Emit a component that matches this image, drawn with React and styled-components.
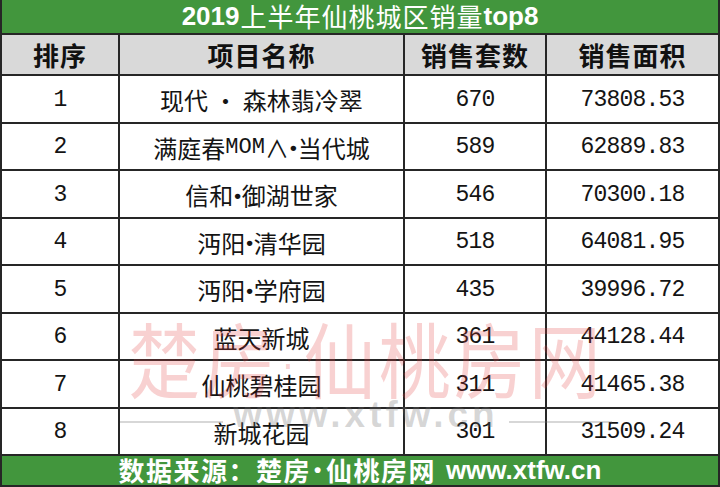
import React from 'react';
import styled, { createGlobalStyle } from 'styled-components';

const GlobalStyle = createGlobalStyle`
  html, body {
    margin: 0;
    padding: 0;
    background: #ffffff;
  }
`;

const rows = [
  { rank: 1, name: '现代 · 森林翡冷翠', count: 670, area: '73808.53' },
  { rank: 2, name: '满庭春MOM∧•当代城', count: 589, area: '62889.83' },
  { rank: 3, name: '信和•御湖世家', count: 546, area: '70300.18' },
  { rank: 4, name: '沔阳•清华园', count: 518, area: '64081.95' },
  { rank: 5, name: '沔阳•学府园', count: 435, area: '39996.72' },
  { rank: 6, name: '蓝天新城', count: 361, area: '44128.44' },
  { rank: 7, name: '仙桃碧桂园', count: 311, area: '41465.38' },
  { rank: 8, name: '新城花园', count: 301, area: '31509.24' },
];

const Sheet = styled.div`
  position: relative;
  box-sizing: border-box;
  width: 720px;
  height: 487px;
  padding: 0 2px 2px 2px;
  background: #262626;
  display: grid;
  grid-template-columns: 116px 283px 140px 171px;
  grid-template-rows: 33px 39px repeat(8, 1fr) 29px;
  gap: 2px;
  overflow: hidden;
`;

const Banner = styled.div`
  grid-column: 1 / -1;
  background: #42963d;
  color: #ffffff;
  display: flex;
  align-items: center;
  justify-content: center;
  font-family: "Noto Sans CJK SC", sans-serif;
  font-size: ${(p) => p.$size}px;
  font-weight: ${(p) => p.$weight};
  letter-spacing: ${(p) => p.$spacing}px;
  line-height: 1.1;
  white-space: nowrap;
`;

const Latin = styled.span`
  font-family: "Liberation Sans", Arial, sans-serif;
  font-weight: 700;
  letter-spacing: 0;
  margin: ${(p) => p.$margin || '0'};
`;

const Dot = styled.span`
  font-family: "Liberation Sans", Arial, sans-serif;
  font-weight: 700;
  font-size: 0.8em;
  margin: 0 ${(p) => p.$gap || 1}px;
`;

const Narrow = styled.span`
  font-family: "Liberation Mono", "Courier New", monospace;
  font-size: 0.92em;
  letter-spacing: 0;
`;

const HeadCell = styled.div`
  background: #d9d9d9;
  color: #111111;
  display: flex;
  align-items: center;
  justify-content: center;
  font-family: "Noto Sans CJK SC", sans-serif;
  font-size: 26px;
  font-weight: 700;
  letter-spacing: 1px;
  line-height: 1;
`;

const Cell = styled.div`
  background: #ffffff;
  color: #141414;
  display: flex;
  align-items: center;
  justify-content: center;
  padding-top: 3px;
  font-family: ${(p) =>
    p.$mono
      ? '"Liberation Mono", "Courier New", monospace'
      : '"Noto Sans CJK SC", sans-serif'};
  font-size: ${(p) => (p.$mono ? 23 : 24)}px;
  letter-spacing: ${(p) => (p.$mono ? -0.8 : 0)}px;
  font-weight: 400;
  line-height: 1;
  white-space: nowrap;
`;

const Watermark = styled.div`
  position: absolute;
  left: 120px;
  top: 316px;
  width: 492px;
  display: flex;
  flex-direction: column;
  align-items: center;
  pointer-events: none;
`;

const WatermarkTitle = styled.div`
  font-family: "Noto Sans CJK SC", sans-serif;
  font-size: 72px;
  font-weight: 400;
  letter-spacing: 3px;
  line-height: 1;
  color: rgba(226, 62, 62, 0.24);
  white-space: nowrap;
  transform: scaleY(1.14);
  transform-origin: top center;
`;

const WatermarkDot = styled.span`
  font-family: "Liberation Sans", Arial, sans-serif;
  font-size: 40px;
  margin: 0 6px 0 3px;
  vertical-align: 12px;
`;

const WatermarkSite = styled.div`
  display: flex;
  align-items: center;
  gap: 10px;
  margin-top: 8px;
  width: 100%;
  color: rgba(110, 110, 110, 0.28);
  font-family: "Liberation Sans", Arial, sans-serif;
  font-size: 37px;
  font-weight: 700;
  letter-spacing: 4px;
  line-height: 1;
`;

const Rule = styled.span`
  flex: 1;
  height: 2px;
  background: rgba(110, 110, 110, 0.28);
  margin-top: 14px;
`;

function renderName(name) {
  const parts = name.split('•');
  return parts.map((part, i) => (
    <React.Fragment key={i}>
      {i > 0 && <Dot>•</Dot>}
      {part.includes('MOM') ? (
        <>
          {part.split('MOM')[0]}
          <Narrow>MOM</Narrow>
          {part.split('MOM')[1]}
        </>
      ) : (
        part
      )}
    </React.Fragment>
  ));
}

export default function App() {
  return (
    <>
      <GlobalStyle />
      <Sheet>
        <Banner $size={26} $weight={400} $spacing={1}>
          <Latin $margin="0 1px 0 0">2019</Latin>上半年仙桃城区销量<Latin>top8</Latin>
        </Banner>

        <HeadCell>排序</HeadCell>
        <HeadCell>项目名称</HeadCell>
        <HeadCell>销售套数</HeadCell>
        <HeadCell>销售面积</HeadCell>

        {rows.map((r) => (
          <React.Fragment key={r.rank}>
            <Cell $mono>{r.rank}</Cell>
            <Cell>{renderName(r.name)}</Cell>
            <Cell $mono>{r.count}</Cell>
            <Cell $mono>{r.area}</Cell>
          </React.Fragment>
        ))}

        <Banner $size={26} $weight={700} $spacing={1.5}>
          数据来源：楚房<Dot $gap={3}>•</Dot>仙桃房网<Latin $margin="0 0 0 10px">www.xtfw.cn</Latin>
        </Banner>

        <Watermark>
          <WatermarkTitle>
            楚房<WatermarkDot>·</WatermarkDot>仙桃房网
          </WatermarkTitle>
          <WatermarkSite>
            <Rule />
            www.xtfw.cn
            <Rule />
          </WatermarkSite>
        </Watermark>
      </Sheet>
    </>
  );
}
